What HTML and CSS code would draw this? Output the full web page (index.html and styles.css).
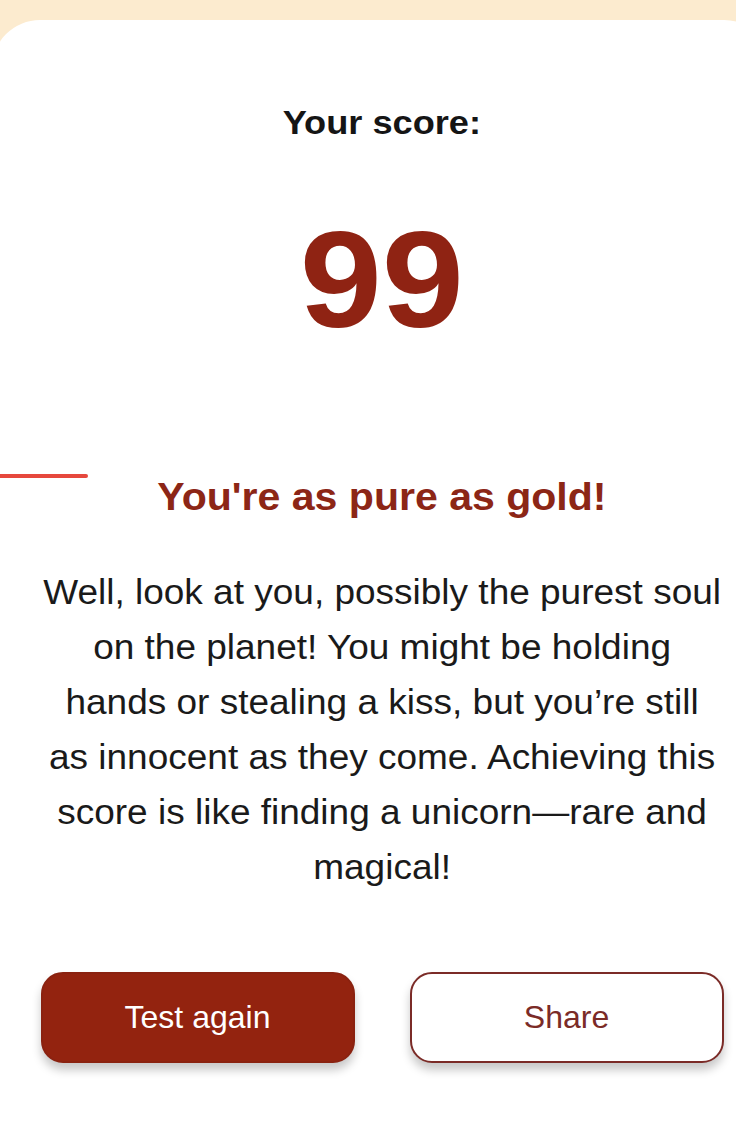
FILE: index.html
```html
<!DOCTYPE html>
<html lang="en">
<head>
<meta charset="utf-8">
<title>Your score</title>
<link rel="stylesheet" href="styles.css">
</head>
<body>
<main class="card">
  <span class="accent-line"></span>
  <h2 class="label">Your score:</h2>
  <div class="score">99</div>
  <h1 class="verdict">You're as pure as gold!</h1>
  <p class="desc">Well, look at you, possibly the purest soul on the planet! You might be holding hands or stealing a kiss, but you’re still as innocent as they come. Achieving this score is like finding a unicorn—rare and magical!</p>
  <div class="actions">
    <button class="btn btn-primary">Test again</button>
    <button class="btn btn-outline">Share</button>
  </div>
</main>
</body>
</html>
```
FILE: styles.css
```css
html, body {
  margin: 0;
  padding: 0;
}
body {
  background: #fcebcf;
  font-family: "Liberation Sans", Arial, sans-serif;
  overflow: hidden;
  height: 1127px;
}
.card {
  position: relative;
  margin: 20px 0 0 -8px;
  width: 780px;
  height: 1107px;
  background: #ffffff;
  border-radius: 48px 48px 0 0;
  padding-top: 81px;
  box-sizing: border-box;
  display: flex;
  flex-direction: column;
  align-items: center;
}
.accent-line {
  position: absolute;
  left: 0;
  top: 454px;
  width: 96px;
  height: 4px;
  border-radius: 2px;
  background: #e6483d;
}
.label {
  margin: 0;
  font-size: 33.5px;
  line-height: 43px;
  font-weight: 700;
  color: #151515;
  transform: scaleX(1.08);
}
.score {
  margin-top: 62px;
  font-size: 138px;
  line-height: 146px;
  font-weight: 700;
  color: #8f2313;
  transform: scaleX(1.07);
}
.verdict {
  margin: 121px 0 0;
  font-size: 38px;
  line-height: 49px;
  font-weight: 700;
  color: #8c2616;
  transform: scaleX(1.08);
}
.desc {
  margin: 43px 0 0;
  width: 18.4em;
  font-size: 34.25px;
  line-height: 55px;
  text-align: center;
  color: #1a1a1a;
  transform: scaleX(1.08);
}
.actions {
  margin-top: 77px;
  display: flex;
  gap: 55px;
}
.btn {
  width: 314px;
  height: 91px;
  border-radius: 22px;
  font-family: "Liberation Sans", Arial, sans-serif;
  font-size: 32px;
  box-shadow: 0 7px 10px rgba(0, 0, 0, 0.22);
  box-sizing: border-box;
}
.btn-primary {
  background: #93230f;
  color: #ffffff;
  border: 2px solid #8a2210;
}
.btn-outline {
  background: #ffffff;
  color: #7b2b27;
  border: 2px solid #7b2b27;
}
```
